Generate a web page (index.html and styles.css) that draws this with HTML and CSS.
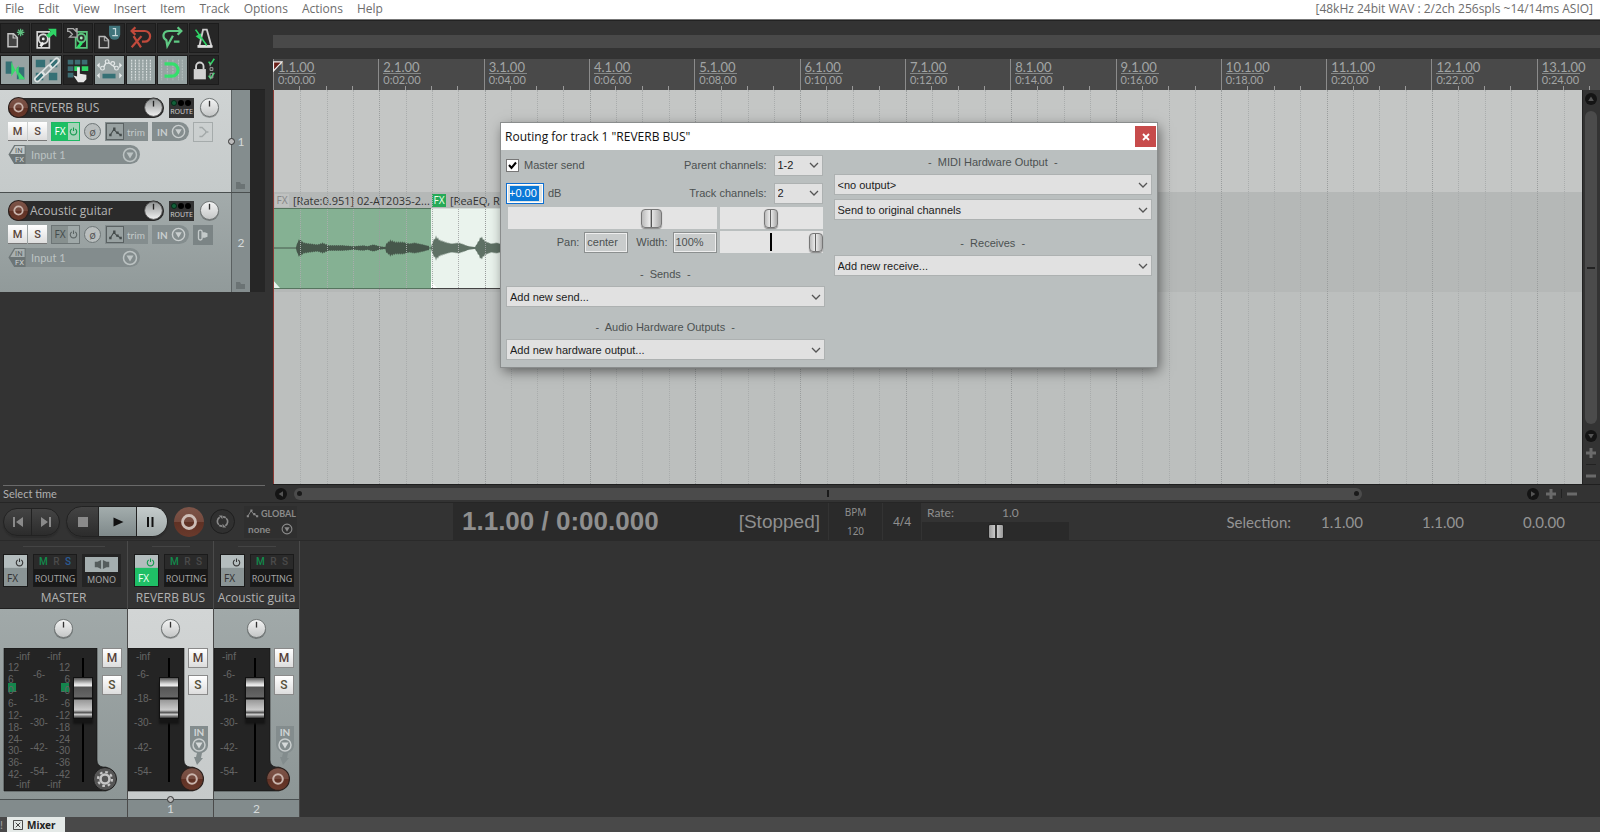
FILE: index.html
```html
<!DOCTYPE html>
<html lang="en">
<head>
<meta charset="utf-8">
<title>Routing for track 1 "REVERB BUS"</title>
<link rel="stylesheet" href="styles.css">
</head>
<body>
<svg class="defs" width="0" height="0" aria-hidden="true">
  <defs>
    <linearGradient id="g-knob" x1="0" y1="0" x2="0" y2="1"><stop offset="0" stop-color="#f4f5f5"/><stop offset="1" stop-color="#c3c5c5"/></linearGradient>
    <linearGradient id="g-knob-dark" x1="0" y1="0" x2="0" y2="1"><stop offset="0" stop-color="#8f9292"/><stop offset="1" stop-color="#f2f2f2"/></linearGradient>
    <linearGradient id="g-rec" x1="0" y1="0" x2="0" y2="1"><stop offset="0" stop-color="#7d5549"/><stop offset=".5" stop-color="#74493d"/><stop offset=".51" stop-color="#5f3124"/><stop offset="1" stop-color="#6a3a2c"/></linearGradient>
  </defs>
  <symbol id="knob" viewBox="0 0 22 22"><circle cx="11" cy="12" r="10" fill="#0004"/><circle cx="11" cy="11" r="9.5" fill="url(#g-knob)" stroke="#6d7272"/><path d="M11 4v6" stroke="#333" stroke-width="1.4"/></symbol>
  <symbol id="knob-dark" viewBox="0 0 22 22"><circle cx="11" cy="11" r="10.5" fill="#222"/><circle cx="11" cy="11" r="9.3" fill="url(#g-knob-dark)" stroke="#555"/><path d="M11 4v6" stroke="#222" stroke-width="1.4"/></symbol>
  <symbol id="rec" viewBox="0 0 20 20"><circle cx="10" cy="10" r="9.5" fill="url(#g-rec)" stroke="#2b201d"/><circle cx="10" cy="10" r="4" fill="none" stroke="#c9b4ac" stroke-width="1.7"/></symbol>
  <symbol id="power" viewBox="0 0 10 10"><path d="M3 2.2a3.6 3.6 0 1 0 4 0M5 .5v4" fill="none" stroke="currentColor" stroke-width="1.2"/></symbol>
  <symbol id="drop" viewBox="0 0 16 16"><circle cx="8" cy="8" r="6.5" fill="none" stroke="currentColor" stroke-width="1.5"/><path d="M4.5 5.5h7L8 11.5z" fill="currentColor"/></symbol>
  <symbol id="env" viewBox="0 0 16 14"><path d="M1 12l5-8 4 5h1l4 3" fill="none" stroke="currentColor" stroke-width="1.3"/><path d="M0 10h3v3H0zM5 2h3v3H5zM9 7h3v3H9zM13 10h3v3h-3z" fill="currentColor"/></symbol>
  <symbol id="folder" viewBox="0 0 9 7"><path d="M0 0h4l1 2h4v5H0z" fill="currentColor"/></symbol>
  <symbol id="up" viewBox="0 0 12 12"><circle cx="6" cy="6" r="6" fill="#141414"/><path d="M3.2 8L6 3.6 8.800 8z" fill="#555"/></symbol>
  <symbol id="plus" viewBox="0 0 10 10"><path d="M5 0v10M0 5h10" stroke="#6a6a6a" stroke-width="3"/></symbol>
  <symbol id="minus" viewBox="0 0 10 10"><path d="M0 5h10" stroke="#6a6a6a" stroke-width="3"/></symbol>
  <symbol id="in-arrow" viewBox="0 0 18 40"><path d="M0 0h18v18a9 9 0 0 1-6 9l-1 5 2 0-6 7-3-8 2 0 1-4a9 9 0 0 1-7-9z" fill="#838c8d"/><circle cx="9" cy="19" r="6" fill="none" stroke="#c9cece" stroke-width="1.5"/><path d="M5.500 16.500h7L9 22.500z" fill="#d5d9d9"/></symbol>
</svg>

<nav class="menubar">
  <button>File</button><button>Edit</button><button>View</button><button>Insert</button><button>Item</button><button>Track</button><button>Options</button><button>Actions</button><button>Help</button>
  <span class="audio-status">[48kHz 24bit WAV : 2/2ch 256spls ~14/14ms ASIO]</span>
</nav>

<main class="workspace">
  <section class="left">
    <div class="toolbar">
      <button aria-label="New project"><svg viewBox="0 0 30 30"><path d="M7.500 10.500h6l4 4v10h-10z" fill="#444" stroke="#c4c4c4" stroke-width="1.6"/><path d="M13 10v5h5" fill="none" stroke="#c4c4c4" stroke-width="1.3"/><path d="M21 5v8M17 9h8M18.200 6.200l5.600 5.600M23.800 6.200l-5.600 5.600" stroke="#5fbf80" stroke-width="1.3"/></svg></button>
      <button aria-label="Open project"><svg viewBox="0 0 30 30"><path d="M4.500 8.500h13v17h-13z" fill="#222" stroke="#d6d6d6" stroke-width="1.8"/><circle cx="11" cy="16" r="5" fill="#333" stroke="#d6d6d6" stroke-width="2"/><circle cx="11" cy="16" r="1.500" fill="#eee"/><path d="M8 24l3-4" stroke="#eee" stroke-width="3"/><path d="M16 5h9v9l-3-3-5 4-3-3 5-4z" fill="#2fd566"/></svg></button>
      <button aria-label="Save project"><svg viewBox="0 0 30 30"><path d="M12.500 8.500h12v17h-12z" fill="#222" stroke="#5cc57e" stroke-width="1.800"/><circle cx="18.500" cy="15" r="4.500" fill="#333" stroke="#5cc57e" stroke-width="2"/><circle cx="18.500" cy="15" r="1.500" fill="#aef0c2"/><path d="M15 25l4-5" stroke="#29e766" stroke-width="3"/><path d="M4 5h6l3 3v-3h1v9H6l3-3-3-3H4z" fill="#262626" stroke="#aaa" stroke-width="1.400"/></svg></button>
      <button aria-label="Project settings"><svg viewBox="0 0 30 30"><path d="M4.500 13.500h6l4 4v8h-10z" fill="#333" stroke="#b9b9b9" stroke-width="1.600"/><path d="M10 13v5h5" fill="none" stroke="#b9b9b9"/><path d="M15 2h12v9a6 6 0 0 1-12 0z" fill="#40747b"/><path d="M19 5h3v7M18.500 12.500h6" fill="none" stroke="#c7dadc" stroke-width="1.300"/></svg></button>
      <button aria-label="Undo"><svg viewBox="0 0 30 30"><path d="M6 7.500h13a5.500 5.500 0 0 1 0 11.500h-3M9 3.500L5 7.500 9 11.500M7 13l8 12M15.500 13L5 25" fill="none" stroke="#c14a3c" stroke-width="2.400"/></svg></button>
      <button aria-label="Redo"><svg viewBox="0 0 30 30"><path d="M24 7.500H12c-7 0-8 7-3 10l1 6 6-11M21 3.500l4 4-4 4M17 19h6" fill="none" stroke="#5fc983" stroke-width="2.400"/></svg></button>
      <button aria-label="Metronome"><svg viewBox="0 0 30 30"><path d="M14 6h4l5 18H10z" fill="none" stroke="#ccc" stroke-width="2"/><path d="M8 24h16" stroke="#ddd" stroke-width="3"/><path d="M6 6l12 17" stroke="#2fd566" stroke-width="1.700"/><path d="M6 13l6-3-1 7z" fill="#2fd566"/></svg></button>
      <button class="on" aria-label="Auto-crossfade"><svg viewBox="0 0 30 30"><path d="M5 6h7v13H5zM17 12h8v13h-8z" fill="#357075"/><path d="M11 6l8 17v-13L11 22z" fill="#3adb6d"/><path d="M19 17v8h7z" fill="#3adb6d"/></svg></button>
      <button class="on" aria-label="Item grouping"><svg viewBox="0 0 30 30"><path d="M3 4h10v8H3zM18 4h8v8h-8zM3 18h8v8H3zM17 18h9v8h-9z" fill="#357075"/><g fill="none" stroke="#dfe4e4" stroke-width="1.700"><rect x="1" y="20" width="12" height="5" rx="2.500" transform="rotate(-45 7 22.500)"/><rect x="9" y="12.500" width="12" height="5" rx="2.500" transform="rotate(-45 15 15)"/><rect x="17" y="5" width="12" height="5" rx="2.500" transform="rotate(-45 23 7.500)"/></g></svg></button>
      <button aria-label="Ripple editing"><svg viewBox="0 0 30 30"><path d="M4 4h6v5H4zM11.500 4h6v5h-6zM19 4h6v5h-6zM4 11h6v5H4zM4 18h6v5H4z" fill="#3c6c72"/><path d="M11 11h6v5h-6zM19 11h7v5h-7z" fill="#2fd566"/><path d="M14 12h3v7l7 1v5l-3 3h-6l-5-7 4 1z" fill="#e6e6e6"/></svg></button>
      <button class="on" aria-label="Envelopes"><svg viewBox="0 0 30 30"><path d="M8 14l4-7h2l4 2 5 5" fill="none" stroke="#e4e8e8" stroke-width="1.500"/><g fill="#97a3a3" stroke="#e4e8e8" stroke-width="1.300"><circle cx="8" cy="13" r="2"/><circle cx="13" cy="6" r="2"/><circle cx="19" cy="8" r="2"/><circle cx="23" cy="13" r="2"/></g><path d="M5 7v6l-3-3zM26 7v6l3-3zM5 18v6l-3-3zM26 18v6l3-3z" fill="#e4e8e8"/><path d="M8 19h14v5H8z" fill="#357075"/></svg></button>
      <button class="on" aria-label="Grid"><svg viewBox="0 0 30 30"><path d="M5 4v22M9 4v22M13 4v22M17 4v22M21 4v22M25 4v22" stroke="#dde2e2" stroke-width="1.200" stroke-dasharray="2 1"/></svg></button>
      <button class="on" aria-label="Snap"><svg viewBox="0 0 30 30"><path d="M4 4v22M10 4v22M16 4v22M22 4v22M26 4v22" stroke="#b9c4c2" stroke-dasharray="2 1"/><path d="M7 8.500h8a6.500 6.500 0 0 1 0 13H7" fill="none" stroke="#35df6c" stroke-width="3.500"/></svg></button>
      <button aria-label="Locking"><svg viewBox="0 0 30 30"><path d="M4 14h13v11H4z" fill="#d2d2d2"/><path d="M6.500 14v-3a4 4 0 0 1 8 0v3" fill="none" stroke="#d2d2d2" stroke-width="2"/><path d="M20 6l2 3 4-6M20 21l2 3 4-6" fill="none" stroke="#2fd566" stroke-width="1.700"/><path d="M21.500 12.500h3v3h-3zM21.500 7v4M21.500 18.500h3v5h-3z" fill="none" stroke="#aaa"/></svg></button>
    </div>

    <div class="tracks">
      <article class="track selected">
        <div class="track-main">
          <div class="row">
            <div class="name-bar"><button class="bare" aria-label="Record arm"><svg class="s20"><use href="#rec"/></svg></button><span class="name">REVERB BUS</span><svg class="s20 volume"><use href="#knob-dark"/></svg></div>
            <button class="route"><span class="leds"><i></i><i></i><i></i></span>ROUTE</button>
            <svg class="s20"><use href="#knob"/></svg>
          </div>
          <div class="row buttons">
            <span class="ms"><button>M</button><button>S</button></span>
            <span class="fx active"><button>FX</button><button aria-label="Bypass"><svg><use href="#power"/></svg></button></span>
            <button class="phase" aria-label="Phase">ø</button>
            <button class="trim"><span><svg><use href="#env"/></svg></span>trim</button>
            <button class="in">IN<svg><use href="#drop"/></svg></button>
            <button class="monitor" aria-label="Monitor"><svg viewBox="0 0 20 20"><path d="M6 5h3l4 4v2l-4 4H6M13 10h3" fill="none" stroke="#a3a9a9" stroke-width="1.500"/></svg></button>
          </div>
          <button class="input"><svg class="infx" viewBox="0 0 18 20"><path d="M0 10L6 0h12v20H6z" fill="#6d7576"/><path d="M2 9.500L7 1h10v8.500z" fill="#c3c9c9"/><text x="7" y="8.500">IN</text><text x="7" y="18" class="lite">FX</text></svg><span>Input 1</span><svg class="dropper"><use href="#drop"/></svg></button>
        </div>
        <div class="track-num"><b class="node"></b>1<svg><use href="#folder"/></svg></div>
      </article>
      <article class="track">
        <div class="track-main">
          <div class="row">
            <div class="name-bar"><button class="bare" aria-label="Record arm"><svg class="s20"><use href="#rec"/></svg></button><span class="name">Acoustic guitar</span><svg class="s20 volume"><use href="#knob-dark"/></svg></div>
            <button class="route"><span class="leds"><i></i><i></i><i></i></span>ROUTE</button>
            <svg class="s20"><use href="#knob"/></svg>
          </div>
          <div class="row buttons">
            <span class="ms"><button>M</button><button>S</button></span>
            <span class="fx"><button>FX</button><button aria-label="Bypass"><svg><use href="#power"/></svg></button></span>
            <button class="phase" aria-label="Phase">ø</button>
            <button class="trim"><span><svg><use href="#env"/></svg></span>trim</button>
            <button class="in">IN<svg><use href="#drop"/></svg></button>
            <button class="monitor filled" aria-label="Monitor"><svg viewBox="0 0 20 20"><rect x="5" y="4.500" width="4" height="11" rx="2" fill="none" stroke="#c4caca" stroke-width="1.500"/><path d="M9 7h3l3 1v4l-3 1H9z" fill="#c4caca"/></svg></button>
          </div>
          <button class="input"><svg class="infx" viewBox="0 0 18 20"><path d="M0 10L6 0h12v20H6z" fill="#6d7576"/><path d="M2 9.500L7 1h10v8.500z" fill="#a9b0b0"/><text x="7" y="8.500">IN</text><text x="7" y="18" class="lite">FX</text></svg><span>Input 1</span><svg class="dropper"><use href="#drop"/></svg></button>
        </div>
        <div class="track-num">2<svg><use href="#folder"/></svg></div>
      </article>
    </div>
    <p class="hint">Select time</p>
  </section>

  <section class="arrange">
    <div class="region-bar"></div>
    <div class="ruler" id="ruler"><svg class="cursor-head" viewBox="0 0 10 11"><path d="M.5.8h8.500L.5 10z" fill="#6b2019" stroke="#f2f2f2" stroke-width="1.200"/></svg></div>
    <div class="canvas-row">
      <div class="canvas">
        <div class="lane first"></div>
        <div class="lane second">
          <div class="clip green">
            <div class="clip-head"><b>FX</b><span>[Rate:0.951] 02-AT2035-2...</span></div>
            <svg class="wave" viewBox="0 0 158 81" preserveAspectRatio="none"><path d="M0 40h158" stroke="#46574b"/><path data-wave="22,0 24,8 26,10 30,6 36,5 44,4 49,6 55,3 70,3 80,2 90,3 94,2 100,4 106,2 112,1 113,5 117,9 122,7 130,7 136,5 142,6 150,4 157,2" fill="#46574b"/><path d="M0 74l6 7H0z" fill="#e8f5ee"/></svg>
          </div>
          <div class="clip white">
            <div class="clip-head"><b>FX</b><span>[ReaEQ, ReaComp]</span></div>
            <svg class="wave" viewBox="0 0 158 81" preserveAspectRatio="none"><path d="M0 40h158" stroke="#5f7165"/><path data-wave="0,1 2,8 5,13 9,9 14,7 20,5 28,6 33,4 38,2 44,1 46,5 50,13 54,8 60,5 66,6 72,4 90,3 157,2" fill="#5f7165"/><path d="M0 74l6 7H0z" fill="#fff"/></svg>
          </div>
        </div>
        <div class="grid" id="grid"></div>
      </div>
      <div class="vscroll">
        <svg class="s12"><use href="#up"/></svg>
        <div class="thumb"><i></i></div>
        <svg class="s12 down"><use href="#up"/></svg>
        <svg class="s10"><use href="#plus"/></svg><hr><svg class="s10"><use href="#minus"/></svg>
      </div>
    </div>
    <div class="hscroll">
      <svg class="s12 turn-left"><use href="#up"/></svg>
      <div class="thumb"><b></b><i></i><b></b></div>
      <svg class="s12 turn-right"><use href="#up"/></svg>
      <svg class="s10"><use href="#plus"/></svg><hr><svg class="s10"><use href="#minus"/></svg>
    </div>
  </section>
</main>

<section class="transport">
  <div class="pill nav"><button aria-label="Start"><svg viewBox="0 0 12 12"><path d="M1 1h2v10H1zM11 1v10L4 6z" fill="#8a8a8a"/></svg></button><button aria-label="End"><svg viewBox="0 0 12 12"><path d="M9 1h2v10H9zM1 1v10l7-5z" fill="#8a8a8a"/></svg></button></div>
  <div class="pill play"><button aria-label="Stop"><svg viewBox="0 0 12 12"><path d="M1 1h10v10H1z" fill="#8a8a8a"/></svg></button><button class="lit" aria-label="Play"><svg viewBox="0 0 12 12"><path d="M1.500 1.500l10 4.500-10 4.500z" fill="#111"/></svg></button><button class="lit2" aria-label="Pause"><svg viewBox="0 0 12 12"><path d="M3 1h2v10H3zM7.500 1h2v10h-2z" fill="#111"/></svg></button></div>
  <button class="bare" aria-label="Record"><svg class="s30" viewBox="0 0 30 30"><circle cx="15" cy="15" r="15" fill="url(#g-rec)"/><circle cx="15" cy="15" r="6.500" fill="none" stroke="#cdbdb6" stroke-width="2.800"/></svg></button>
  <button class="repeat" aria-label="Repeat"><svg viewBox="0 0 14 14"><path d="M4 2.500a5 5 0 0 0-1 8M10 11.500a5 5 0 0 0 1-8M6.500 12a5 5 0 0 1-3-1M7.500 2a5 5 0 0 1 3 1" fill="none" stroke="#8a8a8a" stroke-width="1.800"/><path d="M3 .5h4v4zM11 13.500H7v-4z" fill="#8a8a8a"/></svg></button>
  <div class="global"><span><svg class="genv"><use href="#env"/></svg>GLOBAL</span><span class="mode">none<svg class="gdrop"><use href="#drop"/></svg></span></div>
  <div class="displays">
    <div class="time"><strong>1.1.00 / 0:00.000</strong><span>[Stopped]</span></div>
    <div class="bpm"><span>BPM</span><span>120</span></div>
    <div class="sig">4/4</div>
    <div class="rate"><div><label for="rate">Rate:</label><output>1.0</output></div><input id="rate" type="range" min="0" max="100" value="50"></div>
  </div>
  <div class="selection"><span>Selection:</span><span class="v">1.1.00</span><span class="v">1.1.00</span><span class="v">0.0.00</span></div>
</section>

<section class="mixer">
  <article class="strip master">
    <hr>
    <div class="strip-top">
      <button class="mfx"><svg><use href="#power"/></svg><span>FX</span></button>
      <button class="routing"><span><i class="m">M</i><i>R</i><i class="s">S</i></span>ROUTING</button>
      <button class="mono"><span><svg viewBox="0 0 16 10"><path d="M0 2h3l4-2v10L3 8H0zM16 2h-3L9 0v10l4-2h3z" fill="#555d5d"/></svg></span>MONO</button>
    </div>
    <h2>MASTER</h2>
    <div class="strip-body">
      <svg class="pan"><use href="#knob"/></svg>
      <svg class="meter" viewBox="0 0 127 151"><path d="M4 0h93v112q0 6 6 7h3a13 13 0 0 1 0 24H4z" fill="#242424" stroke="#111" stroke-width=".6"/>
        <path d="M8 35h8v9H8zM61 35h8v9h-8z" fill="#14854c"/>
        <g><text x="16" y="12">-inf</text><text x="47" y="12">-inf</text><text x="8" y="23">12</text><text x="8" y="35">6</text><text x="8" y="46">0-</text><text x="8" y="59">6-</text><text x="8" y="71">12-</text><text x="8" y="83">18-</text><text x="8" y="95">24-</text><text x="8" y="106">30-</text><text x="8" y="118">36-</text><text x="8" y="130">42-</text><text x="16" y="140">-inf</text><text x="47" y="140">-inf</text></g>
        <g text-anchor="middle"><text x="39" y="30">-6-</text><text x="39" y="54">-18-</text><text x="39" y="78">-30-</text><text x="39" y="103">-42-</text><text x="39" y="127">-54-</text></g>
        <g text-anchor="end"><text x="70" y="23">12</text><text x="70" y="35">6</text><text x="70" y="46">-0</text><text x="70" y="59">-6</text><text x="70" y="71">-12</text><text x="70" y="83">-18</text><text x="70" y="95">-24</text><text x="70" y="106">-30</text><text x="70" y="118">-36</text><text x="70" y="130">-42</text></g>
        <circle cx="105" cy="131" r="11.500" fill="#555" stroke="#1d1d1d"/><circle cx="105" cy="131" r="4.500" fill="none" stroke="#c6c6c6" stroke-width="2.600"/><circle cx="105" cy="131" r="7" fill="none" stroke="#c6c6c6" stroke-width="2.200" stroke-dasharray="2.700 2.800"/>
      </svg>
      <input class="fader" type="range" min="0" max="100" value="77" aria-label="Master volume">
      <div class="side"><button>M</button><button>S</button></div>
    </div>
    <footer></footer>
  </article>
  <article class="strip selected">
    <hr>
    <div class="strip-top">
      <button class="mfx active"><svg><use href="#power"/></svg><span>FX</span></button>
      <button class="routing"><span><i class="m">M</i><i>R</i><i>S</i></span>ROUTING</button>
    </div>
    <h2>REVERB BUS</h2>
    <div class="strip-body">
      <svg class="pan"><use href="#knob"/></svg>
      <svg class="meter" viewBox="0 0 85 151"><path d="M0 0h56v112q0 6 6 7h3a13 13 0 0 1 0 24H0z" fill="#242424" stroke="#111" stroke-width=".6"/>
        <g text-anchor="middle"><text x="15" y="12">-inf</text><text x="15" y="30">-6-</text><text x="15" y="54">-18-</text><text x="15" y="78">-30-</text><text x="15" y="103">-42-</text><text x="15" y="127">-54-</text></g>
        <use href="#rec" x="52" y="119" width="24" height="24"/></svg>
      <input class="fader" type="range" min="0" max="100" value="77" aria-label="REVERB BUS volume">
      <div class="side"><button>M</button><button>S</button><span class="mix-in"><svg><use href="#in-arrow"/></svg><b>IN</b></span></div>
    </div>
    <footer><b class="node"></b>1</footer>
  </article>
  <article class="strip">
    <hr>
    <div class="strip-top">
      <button class="mfx"><svg><use href="#power"/></svg><span>FX</span></button>
      <button class="routing"><span><i class="m">M</i><i>R</i><i>S</i></span>ROUTING</button>
    </div>
    <h2>Acoustic guita</h2>
    <div class="strip-body">
      <svg class="pan"><use href="#knob"/></svg>
      <svg class="meter" viewBox="0 0 85 151"><path d="M0 0h56v112q0 6 6 7h3a13 13 0 0 1 0 24H0z" fill="#242424" stroke="#111" stroke-width=".6"/>
        <g text-anchor="middle"><text x="15" y="12">-inf</text><text x="15" y="30">-6-</text><text x="15" y="54">-18-</text><text x="15" y="78">-30-</text><text x="15" y="103">-42-</text><text x="15" y="127">-54-</text></g>
        <use href="#rec" x="52" y="119" width="24" height="24"/></svg>
      <input class="fader" type="range" min="0" max="100" value="77" aria-label="Acoustic guitar volume">
      <div class="side"><button>M</button><button>S</button><span class="mix-in"><svg><use href="#in-arrow"/></svg><b>IN</b></span></div>
    </div>
    <footer>2</footer>
  </article>
</section>

<div class="dock"><span>!</span><button><svg viewBox="0 0 11 11"><path d="M.5.5h10v10H.5zM3 3l5 5M8 3L3 8" fill="none" stroke="#333"/></svg>Mixer</button></div>

<div class="dialog" role="dialog" aria-labelledby="dialog-title">
  <header><h1 id="dialog-title">Routing for track 1 "REVERB BUS"</h1><button aria-label="Close"><svg viewBox="0 0 8 8"><path d="M1 1l6 6M7 1L1 7" stroke="#fff" stroke-width="1.800"/></svg></button></header>
  <div class="dialog-body">
    <div class="col">
      <div class="line tall"><label class="check"><input type="checkbox" checked>Master send</label><label class="right" for="parent">Parent channels:</label><select id="parent" class="small"><option>1-2</option></select></div>
      <div class="line"><input class="db" id="db" type="text" value="+0.00"><label for="db">dB</label><label class="right" for="chan">Track channels:</label><select id="chan" class="small"><option>2</option></select></div>
      <div class="sliders"><input type="range" class="wide" min="0" max="100" value="71" aria-label="Volume"><input type="range" min="0" max="100" value="50" aria-label="Pan"></div>
      <div class="sliders second"><div class="fields"><label for="pan">Pan:</label><input id="pan" type="text" value="center"><label for="width">Width:</label><input id="width" type="text" value="100%"></div><input type="range" class="marked" min="0" max="100" value="100" aria-label="Width amount"></div>
      <h3 class="sends">-&nbsp; Sends &nbsp;-</h3>
      <select aria-label="Sends"><option>Add new send...</option></select>
      <h3 class="outs">-&nbsp; Audio Hardware Outputs &nbsp;-</h3>
      <select aria-label="Audio hardware outputs"><option>Add new hardware output...</option></select>
    </div>
    <div class="col">
      <h3 class="midi">-&nbsp; MIDI Hardware Output &nbsp;-</h3>
      <select aria-label="MIDI output"><option>&lt;no output&gt;</option></select>
      <select class="next" aria-label="MIDI channels"><option>Send to original channels</option></select>
      <h3 class="receives">-&nbsp; Receives &nbsp;-</h3>
      <select aria-label="Receives"><option>Add new receive...</option></select>
    </div>
  </div>
</div>
<script src="app.js"></script>
</body>
</html>
```

FILE: styles.css
```css
* { box-sizing: border-box; }
html, body { height: 100%; }
body { margin: 0; display: flex; flex-direction: column; background: #333; color: #a0a0a0; font: 13px Lato, "Noto Sans", sans-serif; overflow: hidden; }
button, input, select { font: inherit; color: inherit; margin: 0; }
button { padding: 0; border: 0; background: none; }
h1, h2, h3, p { margin: 0; font-weight: normal; }
hr { margin: 0; border: 0; }
svg { display: block; flex: none; }
.defs { position: absolute; }
.s20 { width: 21px; height: 21px; }
.s30 { width: 30px; height: 30px; }
.s12 { width: 12px; height: 12px; }
.s10 { width: 10px; height: 10px; }

/* menu */
.menubar { display: flex; align-items: center; gap: 14px; height: 20px; padding: 0 7px 2px 5px; background: #fff; border-bottom: 1px solid #777; color: #6d6d6d; font: 12px "Open Sans", "Noto Sans", sans-serif; }
.audio-status { margin-left: auto; }

/* workspace */
.workspace { flex: 1; display: flex; min-height: 0; border-top: 1px solid #222; }
.left { width: 265px; margin-right: 8px; display: flex; flex-direction: column; }
.toolbar { display: grid; grid-template-columns: repeat(7, 1fr); gap: 2px 1px; width: 219px; height: 68px; padding: 2px 0 4px; align-content: start; }
.toolbar button { height: 30px; background: #262626; border: 1px solid #1c1c1c; display: grid; place-items: center; }
.toolbar button.on { background: #97a3a3; }
.toolbar svg { width: 28px; height: 28px; }
.tracks { background: #262626; border-top: 1px solid #222; }
.track { display: flex; width: 250px; height: 102px; background: linear-gradient(#a3abab, #919a9a); border-top: 1px solid #4a4f4f; }
.track.selected { background: linear-gradient(#cfd3d3, #c5caca); border-top: 0; }
.track:last-child { height: 100px; }
.track-main { width: 231px; padding: 7px 0 0 8px; display: flex; flex-direction: column; gap: 3px; align-items: flex-start; }
.row { display: flex; align-items: center; height: 21px; gap: 5px; }
.name-bar { display: flex; align-items: center; width: 156px; height: 20px; background: #2b2b2b; border-radius: 10px; color: #b5b5b5; font: 12px "Open Sans", "Noto Sans", sans-serif; }
.name { flex: 1; padding-left: 1px; }
.route { width: 25px; height: 20px; background: #333; color: #ccc; font: 7px/9px "Noto Sans", sans-serif; }
.leds { display: flex; gap: 1px; padding: 1px 2px; }
.leds i { width: 6px; height: 6px; border-radius: 3px; background: #000; }
.leds i:first-child { background: #12613a; border: 1px solid #062b18; }
.row.buttons { gap: 4px; font-size: 11px; }
.ms { display: flex; gap: 1px; }
.ms button { width: 19px; height: 19px; background: linear-gradient(#fff, #ddd); color: #5a453b; border-bottom: 1px solid #777; font: 500 11px Roboto, sans-serif; }
.fx { display: flex; width: 29px; height: 19px; border: 1px solid #6d7576; }
.fx button { flex: 1; display: grid; place-items: center; height: 17px; background: #9fa8a8; color: #5c6464; font: 10px/17px "Noto Sans", sans-serif; }
.fx button:first-child { flex: none; width: 16px; background: #87908f; color: #454c4c; }
.fx.active { border-color: #1eb863; }
.fx.active button { background: #a5d3b8; color: #159a4f; }
.fx.active button:first-child { background: #1dbf64; color: #fff; }
.fx svg { width: 9px; height: 9px; }
.phase { width: 17px; height: 17px; border: 1px solid #6d7576; border-radius: 9px; background: #b9bebe; color: #555; line-height: 14px; }
.trim { display: flex; align-items: center; gap: 3px; width: 43px; height: 19px; background: #848d8e; color: #c3c9c9; font-size: 10px; }
.trim span { display: grid; place-items: center; width: 18px; height: 17px; margin-left: 1px; border: 1px solid #5b6263; background: #98a1a1; color: #444b4b; }
.trim svg { width: 13px; height: 11px; }
.in { display: flex; align-items: center; justify-content: space-between; width: 37px; height: 19px; padding: 0 3px 0 5px; background: #848d8e; border-radius: 0 10px 10px 0; color: #c9cece; font-size: 10px; font-weight: bold; }
.in svg { width: 15px; height: 15px; }
.monitor { width: 20px; height: 20px; border: 1px solid #a5abab; }
.monitor.filled { background: #7b8485; border-color: #7b8485; }
.monitor svg { width: 18px; height: 18px; }
.input { display: flex; align-items: center; width: 132px; height: 19px; background: linear-gradient(90deg, transparent 6px, #838c8d 6px); border-radius: 0 10px 10px 0; color: #bcc3c3; font-size: 11px; padding-right: 2px; }
.infx { width: 18px; height: 19px; }
.infx text { font: 8px Roboto, sans-serif; fill: #5c6363; }
.infx .lite { fill: #d0d5d5; }
.input span { flex: 1; text-align: left; padding-left: 5px; }
.dropper { width: 16px; height: 16px; }
.track-num { position: relative; width: 19px; border-left: 1px solid #5a6061; background: #848d8e; color: #d5dada; display: flex; justify-content: center; align-items: center; font-size: 12px; }
.track-num svg { position: absolute; right: 5px; bottom: 3px; width: 9px; height: 7px; color: #6b7374; }
.node { position: absolute; width: 7px; height: 7px; border: 1px solid #333; border-radius: 4px; background: #bbb; }
.track-num .node { left: -4px; top: 48px; }
.hint { margin-top: auto; margin-left: 3px; height: 17px; border-top: 1px solid #6a6a6a; font-size: 11px; line-height: 16px; color: #b0b0b0; }

/* arrange */
.arrange { flex: 1; min-width: 0; display: flex; flex-direction: column; }
.region-bar { height: 13px; margin-top: 14px; background: #494949; }
.ruler { position: relative; display: grid; grid-template-columns: repeat(50, 1fr) .4fr; height: 31px; margin-top: 11px; background: #494949; overflow: hidden; color: #a2a5a5; }
.ruler .bar { grid-row: 1 / 3; border-left: 1px solid #8b8b8b; padding: 0 0 0 4px; white-space: nowrap; line-height: 14px; }
.ruler .bar b { display: block; width: 38px; height: 15px; border-bottom: 1px solid #858888; font-weight: normal; line-height: 16px; }
.ruler .bar small { font-size: 11px; line-height: 12px; display: block; }
.ruler .tick { grid-row: 2; height: 4px; align-self: end; border-left: 1px solid #999; }
.cursor-head { position: absolute; left: 0; top: 2px; width: 10px; height: 11px; }
.canvas-row { flex: 1; display: flex; min-height: 0; }
.canvas { position: relative; flex: 1; min-width: 0; background: #bcbfbe; border-left: 1px solid #8a3b36; overflow: hidden; }
.lane.first { height: 102px; background: #c4c6c5; }
.lane.second { display: flex; height: 100px; background: #b5b8b7; }
.clip { width: 157px; display: flex; flex-direction: column; }
.clip.white { width: 200px; }
.clip-head { display: flex; align-items: center; height: 16px; overflow: hidden; white-space: nowrap; color: #333; font: 11px "Open Sans", "Noto Sans", sans-serif; gap: 4px; padding-left: 1px; }
.clip-head b { width: 14px; height: 13px; color: #888; background: #bfc1c0; font: 10px/13px "Noto Sans", sans-serif; text-align: center; }
.white .clip-head b { background: #26a957; color: #e8ffe8; }
.clip .wave { width: 100%; height: 81px; background: #85b193; border-top: 1px solid #56755f; border-bottom: 1px solid #56755f; }
.white .wave { background: #eaf3ed; border-top-color: #d5ddd8; border-bottom-color: #444; width: 158px; }
.grid { position: absolute; inset: 0; display: grid; grid-template-columns: repeat(49, 1fr) .7fr; }
.grid i { border-left: 1px dotted #a9acac; }
.grid i:nth-child(4n + 1) { border-left-color: #9a9d9d; }
.grid i:first-child { border: 0; }
.vscroll { width: 18px; display: flex; flex-direction: column; align-items: center; gap: 6px; padding: 3px 2px 3px 0; border-left: 1px solid #222; }
.vscroll .thumb { flex: 1; width: 12px; border-radius: 6px; background: #4b4b4b; display: grid; place-items: center; }
.vscroll .thumb i { width: 8px; height: 2px; background: #222; }
.vscroll hr { width: 10px; height: 1px; background: #222; }
.down { transform: rotate(180deg); }
.turn-left { transform: rotate(-90deg); }
.turn-right { transform: rotate(90deg); }
.hscroll { display: flex; align-items: center; height: 18px; gap: 7px; padding: 0 23px 0 2px; border-top: 1px solid #1f1f1f; }
.hscroll .thumb { width: 82%; height: 12px; border-radius: 6px; background: #4b4b4b; display: flex; justify-content: space-between; align-items: center; padding: 0 3px; }
.hscroll .thumb b { width: 5px; height: 5px; border-radius: 3px; background: #1a1a1a; }
.hscroll .thumb i { width: 2px; height: 7px; background: #1a1a1a; }
.hscroll .turn-right { margin-left: auto; }
.hscroll hr { width: 1px; height: 9px; background: #222; margin: 0 -2px; }

/* transport */
.transport { display: flex; align-items: center; height: 39px; gap: 6px; padding-left: 3px; border-top: 1px solid #262626; border-bottom: 1px solid #2a2a2a; }
.pill { display: flex; overflow: hidden; background: linear-gradient(#444, #2c2c2c); border: 1px solid #222; box-shadow: 0 2px 1px #2226; }
.pill button { display: grid; place-items: center; border-right: 1px solid #222; }
.pill button:last-child { border-right: 0; }
.pill svg { width: 12px; height: 12px; }
.nav { width: 57px; height: 28px; border-radius: 14px; }
.nav button { flex: 1; }
.play { width: 102px; height: 31px; border-radius: 16px; }
.play button { width: 32px; }
.play .lit { width: 38px; background: linear-gradient(#a3adad, #7f898a); }
.play .lit2 { flex: 1; background: linear-gradient(#c5cccc, #9fa8a8); }
.play .lit2 svg { margin-right: 4px; }
.repeat { display: grid; place-items: center; width: 25px; height: 25px; border-radius: 13px; border: 1px solid #1e1e1e; background: #303030; }
.repeat svg { width: 13px; height: 13px; }
.global { width: 53px; height: 32px; margin-left: 3px; background: #2f2f2f; font-size: 9px; font-weight: bold; display: flex; flex-direction: column; justify-content: space-around; color: #8a8a8a; }
.global span { display: flex; align-items: center; gap: 2px; padding: 0 2px; }
.global .mode { justify-content: space-between; font-size: 10px; padding: 0 4px; }
.genv { width: 13px; height: 10px; }
.gdrop { width: 12px; height: 12px; }
.displays { display: flex; gap: 1px; align-self: stretch; margin-left: 150px; color: #8f8f8f; }
.displays > div { background: #2a2a2a; }
.time { width: 375px; display: flex; align-items: center; justify-content: space-between; padding: 0 8px 0 9px; font-family: "Liberation Sans", sans-serif; white-space: nowrap; }
.time strong { font-size: 26px; }
.time span { font-size: 19px; }
.bpm { width: 53px; display: flex; flex-direction: column; align-items: center; justify-content: space-between; padding: 2px 0; font: 10px "Noto Sans", sans-serif; }
.sig { width: 38px; display: grid; place-items: center; font-family: "Noto Sans", sans-serif; font-size: 12px; }
.displays .rate { width: 147px; display: flex; flex-direction: column; background: none; font-size: 12px; }
.rate div { display: flex; height: 19px; align-items: center; padding-left: 5px; gap: 48px; }
.rate input { height: 18px; background: #2a2a2a; }
.selection { display: flex; gap: 59px; margin-left: auto; padding-right: 35px; color: #949494; font-size: 15px; }
.selection span:first-child { margin-right: -29px; }
.selection .v { width: 42px; }

input[type=range] { appearance: none; border-radius: 0; }
.rate input::-webkit-slider-thumb { appearance: none; width: 16px; height: 15px; border: 1px solid #222; border-radius: 2px; background: linear-gradient(90deg, #999, #ccc 45%, #333 46%, #333 54%, #ccc 55%, #999); }

/* mixer */
.mixer { display: flex; }
.strip { width: 86px; display: flex; flex-direction: column; border-right: 1px solid #4a4a4a; }
.strip.master { width: 128px; }
.strip > hr { height: 1px; width: 38px; margin: 5px auto 7px; background: #444; }
.strip.master > hr { width: 82px; }
.strip-top { display: flex; gap: 5px; padding: 0 0 0 6px; height: 33px; }
.master .strip-top { padding-left: 3px; }
.mfx { display: flex; flex-direction: column; width: 25px; height: 33px; background: linear-gradient(#b4bdbe 40%, #8b9596 42%); border: 1px solid #1b1b1b; color: #333; }
.mfx svg { width: 9px; height: 9px; margin: 3px 3px 0 auto; }
.mfx span { margin-top: 4px; padding-left: 3px; font: 10px "Noto Sans", sans-serif; align-self: flex-start; }
.mfx.active { background: linear-gradient(#b4bdbe 40%, #1fbf66 42%); color: #0d9a4a; }
.mfx.active span { color: #eafff2; }
.routing { width: 44px; height: 33px; display: flex; flex-direction: column; background: #181818; border: 1px solid #1b1b1b; color: #a5a5a5; font: 9px "Noto Sans", sans-serif; align-items: center; }
.routing span { display: flex; justify-content: space-between; align-self: stretch; height: 14px; padding: 0 5px; margin-bottom: 3px; background: #2a2a2a; color: #4a4a4a; font: 500 10px/14px Roboto, sans-serif; }
.routing i { font-style: normal; }
.routing .m { color: #128a4c; }
.routing .s { color: #2a5d96; }
.mono { width: 39px; height: 33px; display: flex; flex-direction: column; align-items: center; gap: 1px; padding-top: 3px; background: #242424; color: #a5a5a5; font: 9px "Noto Sans", sans-serif; }
.mono span { width: 33px; height: 15px; background: #a4aeaf; display: grid; place-items: center; }
.mono svg { width: 16px; height: 9px; }
.strip h2 { height: 21px; font: 12px/22px "Open Sans", "Noto Sans", sans-serif; text-align: center; white-space: nowrap; color: #b2b2b2; }
.strip-body { display: grid; grid-template: 39px 151px / 1fr 30px 26px; background: linear-gradient(#a1a9a9, #8d9696); border-top: 1px solid #1f1f1f; }
.selected .strip-body { background: linear-gradient(#d2d5d5, #c6caca); }
.pan { grid-area: 1 / 1 / 2 / 4; width: 21px; height: 21px; place-self: center; }
.meter { grid-area: 2 / 1 / 3 / 4; width: 100%; height: 151px; }
.meter text { font: 10px "Liberation Sans", sans-serif; fill: #666; }
.fader { grid-area: 2 / 2; writing-mode: vertical-lr; direction: rtl; width: 20px; height: 124px; margin: 10px 0 0 2px; background: linear-gradient(90deg, transparent 9px, #000 9px, #000 11px, transparent 11px); }
.fader::-webkit-slider-thumb { appearance: none; width: 20px; height: 42px; border: 1px solid #111; background: linear-gradient(#555, #ddd 6px, #eee 8px, #555 9px, #666 19px, #111 20px, #111 21px, #999 22px, #ccc 32px, #444 35px, #ddd 36px, #333); box-shadow: 0 5px 2px #151515; }
.side { grid-area: 2 / 3; display: flex; flex-direction: column; gap: 7px; padding-left: 1px; }
.side button { width: 20px; height: 20px; background: linear-gradient(#fff, #ddd); border: 1px solid #8a8a8a; color: #553f37; font: 500 12px Roboto, sans-serif; }
.side button + button { color: #55503a; }
.mix-in { display: grid; width: 18px; margin: 24px 0 0 2px; color: #d0d5d5; font-size: 10px; text-align: center; }
.mix-in svg { grid-area: 1 / 1; width: 18px; height: 40px; }
.mix-in b { grid-area: 1 / 1; }
.strip footer { position: relative; height: 18px; background: #828b8c; border-top: 1px solid #4a5051; color: #d5dada; text-align: center; line-height: 18px; font-size: 12px; }
.strip footer .node { left: 39px; top: -4px; }

/* dock */
.dock { display: flex; align-items: center; height: 15px; background: #494949; font-size: 11px; }
.dock span { width: 7px; }
.dock button { display: flex; align-items: center; gap: 4px; height: 15px; padding: 0 10px 0 6px; background: #e4e9e7; color: #222; font: bold 10px "Noto Sans", sans-serif; }
.dock svg { width: 10px; height: 10px; }

/* dialog */
.dialog { position: absolute; left: 501px; top: 123px; width: 656px; background: #babfbf; color: #4c5151; font: 11px "Liberation Sans", sans-serif; box-shadow: 0 0 0 1px #8a8d8d, 2px 4px 12px #0008; }
.dialog header { display: flex; align-items: center; height: 27px; padding: 0 1px 0 4px; background: #fff; color: #111; }
.dialog h1 { flex: 1; font: 12px "Open Sans", "Noto Sans", sans-serif; }
.dialog header button { display: grid; place-items: center; width: 21px; height: 21px; background: #c74b4b; }
.dialog header svg { width: 8px; height: 8px; }
.dialog-body { display: grid; grid-template-columns: 1fr 1fr; gap: 9px; padding: 0 5px 7px; }
.col { display: flex; flex-direction: column; }
.line { display: flex; align-items: center; height: 22px; margin-top: 5px; gap: 4px; padding-right: 2px; }
.line.tall { height: 24px; margin-top: 3px; }
.line .right { margin-left: auto; margin-right: 3px; }
.check { display: flex; align-items: center; gap: 5px; }
.check input { appearance: none; width: 13px; height: 13px; border: 1px solid #777; background: #fff url("data:image/svg+xml,%3Csvg xmlns='http://www.w3.org/2000/svg' viewBox='0 0 11 11'%3E%3Cpath d='M2 5l2.500 3L9 2.500' fill='none' stroke='%23000' stroke-width='2'/%3E%3C/svg%3E"); }
.dialog select { appearance: none; width: 100%; height: 21px; padding: 0 20px 0 3px; border: 1px solid #adb1b1; border-radius: 0; color: #1c1c1c; background: #e1e1e1 url("data:image/svg+xml,%3Csvg xmlns='http://www.w3.org/2000/svg' width='10' height='6'%3E%3Cpath d='M1 1l4 4 4-4' fill='none' stroke='%23555' stroke-width='1.300'/%3E%3C/svg%3E") no-repeat right 3px center; }
.dialog select.small { width: 49px; }
.db { width: 38px; height: 21px; padding: 0 2px; border: 1px solid #0f6fd0; outline: 1px solid #fff; outline-offset: -2px; background: linear-gradient(#0a78d7, #0a78d7) 3px center / 29px 15px no-repeat #dfe3e3; color: #fff; }
.sliders { display: flex; gap: 3px; margin-top: 3px; padding: 0 2px 0 2px; }
.sliders.second { margin-top: 2px; }
.sliders input[type=range] { width: 103px; height: 22px; background: #e4e4e4; }
.sliders input.wide { flex: 1; width: auto; }
.sliders input.marked { background: linear-gradient(#000, #000) center / 2px 18px no-repeat #e4e4e4; }
.sliders input::-webkit-slider-thumb { appearance: none; width: 14px; height: 19px; border: 1px solid #777; border-radius: 4px; background: linear-gradient(90deg, #bbb, #eee 44%, #555 46%, #555 52%, #e4e4e4 54%, #aaa); box-shadow: 0 1px 1px #0006; }
.sliders .wide::-webkit-slider-thumb { width: 21px; }
.fields { flex: 1; display: flex; align-items: center; justify-content: flex-end; gap: 5px; }
.fields input { width: 44px; height: 21px; padding: 0 2px; border: 1px solid #8b8f8f; outline: 1px solid #eee; outline-offset: -2px; background: #c9cccc; }
.fields input + label { margin-left: 3px; }
.col h3 { height: 20px; font-size: 11px; line-height: 20px; text-align: center; margin-bottom: 2px; }
.col .sends { margin-top: 11px; }
.col .outs { margin-top: 10px; }
.col .midi { margin-top: 2px; }
.next { margin-top: 4px; }
.col .receives { margin-top: 13px; }
```

FILE: app.js
```js
const ruler = document.getElementById("ruler");
const grid = document.getElementById("grid");

for (let bar = 0; bar < 13; bar++) {
  const cell = document.createElement("div");
  const seconds = String(bar * 2).padStart(2, "0");
  cell.className = "bar";
  cell.style.gridColumn = `${bar * 4 + 1} / span ${bar < 12 ? 4 : 3}`;
  cell.innerHTML = `<b>${bar + 1}.1.00</b><small>0:${seconds}.00</small>`;
  ruler.append(cell);
  for (let beat = 1; beat < 4 && bar * 4 + beat < 51; beat++) {
    const tick = document.createElement("i");
    tick.className = "tick";
    tick.style.gridColumn = bar * 4 + beat + 1;
    ruler.append(tick);
  }
}

for (let i = 0; i < 50; i++) grid.append(document.createElement("i"));

// Expand each list of "x,amplitude" pairs into a jagged outline round the centre line.
for (const path of document.querySelectorAll("[data-wave]")) {
  const points = path.dataset.wave.split(" ").map(p => p.split(",").map(Number));
  const top = [], bottom = [];
  for (let n = 0; n < points.length - 1; n++) {
    const [x0, a0] = points[n], [x1, a1] = points[n + 1];
    for (let x = x0; x < x1; x++) {
      const a = a0 + (a1 - a0) * (x - x0) / (x1 - x0);
      const jag = x % 2 ? 1 : 0.75;
      top.push(`${x} ${40 - a * jag}`);
      bottom.unshift(`${x} ${40 + a * jag}`);
    }
  }
  path.setAttribute("d", `M${top.join("L")}L${bottom.join("L")}Z`);
}
```
